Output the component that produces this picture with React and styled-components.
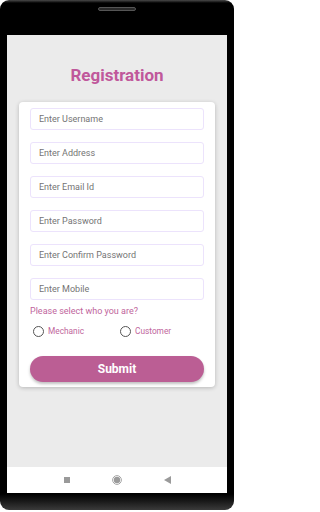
import styled, { createGlobalStyle } from 'styled-components';

const GlobalStyle = createGlobalStyle`
    * {
        box-sizing: border-box;
    }

    body {
        margin: 0;
        background-color: #ffffff;
        font-family: Roboto, "Noto Sans", sans-serif;
    }
`

const Phone = styled.div`
    width: 234px;
    height: 510px;
    display: flex;
    flex-direction: column;
    padding: 0 7px;
    border-radius: 9px;
    background: linear-gradient(#4a4a4a 0, #000 3px, #000 calc(100% - 16px), #1c1c1c calc(100% - 8px), #3a3a3a 100%);
`

const TopBezel = styled.div`
    height: 35px;
    display: flex;
    justify-content: center;
    padding-top: 7px;
`

const Speaker = styled.div`
    width: 38px;
    height: 4px;
    border-radius: 2px;
    background-color: #2a2a2a;
    border: 1px solid #555;
`

const Screen = styled.main`
    flex: 1;
    background-color: #ebebeb;
    padding: 30px 12px 0;
    display: flex;
    flex-direction: column;
`

const Title = styled.h1`
    margin: 0;
    font-size: 17px;
    line-height: 20px;
    font-weight: 700;
    text-align: center;
    color: #c0589b;
`

const Card = styled.form`
    margin-top: 17px;
    background-color: #fff;
    border-radius: 4px;
    box-shadow: 0 1px 4px rgba(0, 0, 0, 0.22);
    padding: 6px 11px 5px;
    display: flex;
    flex-direction: column;
`

const Fields = styled.div`
    display: flex;
    flex-direction: column;
    gap: 12px;
`

const Input = styled.input`
    height: 22px;
    width: 100%;
    border: 1px solid #ece3fc;
    border-radius: 3px;
    padding: 0 8px;
    font-family: Roboto, "Noto Sans", sans-serif;
    font-size: 9px;
    color: #444;
    background: #fff;
    outline: none;

    &::placeholder {
        color: #747474;
    }
`

const Prompt = styled.p`
    margin: 5px 0 0;
    font-size: 9px;
    line-height: 13px;
    color: #c0659c;
`

const RadioRow = styled.div`
    margin-top: 6px;
    height: 14px;
    padding-left: 3px;
    display: grid;
    grid-template-columns: 87px auto;
    align-items: center;
`

const Option = styled.label`
    display: flex;
    align-items: center;
    gap: 4px;
    font-size: 8.3px;
    color: #c0659c;
`

const Circle = styled.span`
    width: 11px;
    height: 11px;
    border-radius: 50%;
    border: 1.5px solid #555;
`

const SubmitButton = styled.button`
    margin-top: 18px;
    height: 26px;
    border: none;
    border-radius: 13px;
    background-color: #bb5e94;
    box-shadow: 0 2px 3px rgba(0, 0, 0, 0.25);
    color: #fff;
    font-family: Roboto, "Noto Sans", sans-serif;
    font-size: 12px;
    font-weight: 700;
`

const NavBar = styled.nav`
    height: 26px;
    background-color: #fff;
    display: flex;
    justify-content: center;
    align-items: center;
    gap: 42px;
`

const Square = styled.span`
    width: 6px;
    height: 6px;
    background-color: #9a9a9a;
`

const BottomBezel = styled.div`
    height: 17px;
`

const fields = [
    'Enter Username',
    'Enter Address',
    'Enter Email Id',
    'Enter Password',
    'Enter Confirm Password',
    'Enter Mobile',
]

export default function App () {
    return (
        <>
            <GlobalStyle />
            <Phone>
                <TopBezel>
                    <Speaker />
                </TopBezel>
                <Screen>
                    <Title>Registration</Title>
                    <Card onSubmit={e => e.preventDefault()}>
                        <Fields>
                            {fields.map(f => <Input key={f} placeholder={f} />)}
                        </Fields>
                        <Prompt>Please select who you are?</Prompt>
                        <RadioRow>
                            <Option><Circle />Mechanic</Option>
                            <Option><Circle />Customer</Option>
                        </RadioRow>
                        <SubmitButton type="submit">Submit</SubmitButton>
                    </Card>
                </Screen>
                <NavBar>
                    <Square />
                    <svg width="10" height="10" viewBox="0 0 10 10">
                        <circle cx="5" cy="5" r="4.4" fill="none" stroke="#a5a5a5" strokeWidth="1" />
                        <circle cx="5" cy="5" r="3.2" fill="#9a9a9a" />
                    </svg>
                    <svg width="7" height="8" viewBox="0 0 7 8">
                        <polygon points="7,0 7,8 0,4" fill="#9a9a9a" />
                    </svg>
                </NavBar>
                <BottomBezel />
            </Phone>
        </>
    )
}
